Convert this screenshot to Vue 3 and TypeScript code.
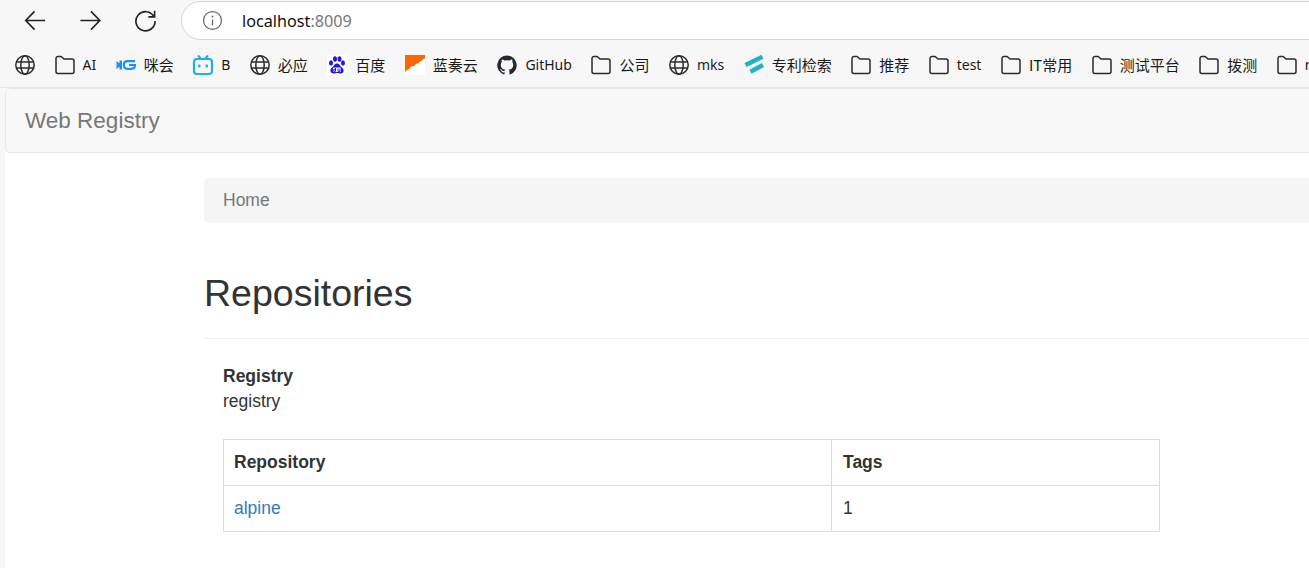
<script setup lang="ts">
type Mark = 'globe' | 'folder' | 'mihui' | 'bili' | 'baidu' | 'lanzou' | 'github' | 'patent'
interface Bookmark { icon: Mark; label?: string; latin?: boolean }
const bookmarks: Bookmark[] = [
  { icon: 'globe' },
  { icon: 'folder', label: 'AI', latin: true },
  { icon: 'mihui', label: '咪会' },
  { icon: 'bili', label: 'B', latin: true },
  { icon: 'globe', label: '必应' },
  { icon: 'baidu', label: '百度' },
  { icon: 'lanzou', label: '蓝奏云' },
  { icon: 'github', label: 'GitHub', latin: true },
  { icon: 'folder', label: '公司' },
  { icon: 'globe', label: 'mks', latin: true },
  { icon: 'patent', label: '专利检索' },
  { icon: 'folder', label: '推荐' },
  { icon: 'folder', label: 'test', latin: true },
  { icon: 'folder', label: 'IT常用' },
  { icon: 'folder', label: '测试平台' },
  { icon: 'folder', label: '拨测' },
  { icon: 'folder', label: 'mks', latin: true },
]
</script>

<template>
  <div class="window">
    <header class="toolbar">
      <svg class="nav-icon" viewBox="0 0 24 24"><path d="M2.5 12H22M11 2.5 1.8 12l9.2 9.5" /></svg>
      <svg class="nav-icon" viewBox="0 0 24 24"><path d="M1.5 12H21.5M12.5 2.5l9.2 9.5-9.2 9.5" /></svg>
      <svg class="nav-icon" viewBox="0 0 24 24"><path d="M20.8 8A10 10 0 1 0 22 12.5M21.5 1.8V8.2H15" /></svg>
      <div class="address">
        <svg class="info" viewBox="0 0 20 20">
          <circle cx="10" cy="10" r="9.4" />
          <path d="M10 9v6" />
          <circle class="dot" cx="10" cy="5.8" r="1" />
        </svg>
        <span class="url">localhost<span class="port">:8009</span></span>
      </div>
    </header>

    <nav class="bookmarks">
      <div v-for="(b, i) in bookmarks" :key="i" class="bookmark">
        <svg class="mark" viewBox="0 0 20 20">
          <g v-if="b.icon === 'globe'" class="line">
            <circle cx="10" cy="10" r="9.2" />
            <ellipse cx="10" cy="10" rx="4.2" ry="9.2" />
            <path d="M1.4 7h17.2M1.4 13h17.2" />
          </g>
          <path v-else-if="b.icon === 'folder'" class="line"
            d="M1 5v11.5A2 2 0 0 0 3 18.5H17A2 2 0 0 0 19 16.5V6A2 2 0 0 0 17 4H9L6.800 2A1.500 1.500 0 0 0 5.800 1.500H3A2 2 0 0 0 1 3.500V5Z" />
          <g v-else-if="b.icon === 'mihui'">
            <path fill="#1890ff" d="M0.500 6 3.500 8.200V5.500H6V14.500H3.500V11.800L0.500 14Z" />
            <path fill="none" stroke="#1890ff" stroke-width="2.200" d="M19 6.200H11.500Q7.800 6.200 7.800 10T11.500 13.800H15.500Q19 13.800 19 10H13" />
          </g>
          <g v-else-if="b.icon === 'bili'">
            <path fill="none" stroke="#20b0e3" stroke-width="2" stroke-linecap="round" d="M5.500 1 8 4M14.500 1 12 4" />
            <rect x="1" y="4" width="18" height="15" rx="3" fill="none" stroke="#20b0e3" stroke-width="2.200" />
            <rect x="5" y="9.500" width="2.500" height="3" rx="1" fill="#20b0e3" />
            <rect x="12.500" y="9.500" width="2.500" height="3" rx="1" fill="#20b0e3" />
          </g>
          <g v-else-if="b.icon === 'baidu'">
            <rect width="20" height="20" fill="#fff" />
            <g fill="#2319dc">
              <ellipse cx="4" cy="8" rx="2" ry="2.700" />
              <ellipse cx="8" cy="4" rx="2" ry="2.800" />
              <ellipse cx="12.500" cy="4" rx="2" ry="2.800" />
              <ellipse cx="16" cy="8" rx="2" ry="2.700" />
              <path d="M10 8.500C7.500 8.500 7 11 5 12.500 2.500 14.500 3 18.500 6.500 18.500 8 18.500 9 18 10 18S12.500 18.500 14 18.500C17 18.500 17.500 14.500 15 12.500 13 11 12.500 8.500 10 8.500Z" />
            </g>
            <rect x="6" y="12.500" width="8" height="4.500" rx="1" fill="#fff" />
            <path fill="none" stroke="#2319dc" stroke-width="1" d="M8.500 12.800v3.500H6.800v-2h1.700M11 13.500v2.800h2v-2.800" />
          </g>
          <g v-else-if="b.icon === 'lanzou'">
            <rect width="20" height="20" fill="#fff" />
            <path fill="#ff6600" d="M0 0H20V3.500C18 3.500 17.500 5 16.500 6 15 6 14 7.500 13 8.500 11 8 10 10 9 11 6.500 10.500 5 12.500 4 14 2.500 14.500 1 15.500 0 17Z" />
          </g>
          <path v-else-if="b.icon === 'github'" fill="#24292f"
            d="M10 .5a9.750 9.750 0 0 0-3.080 19c.49.090.670-.210.670-.470v-1.700c-2.710.590-3.280-1.310-3.280-1.310-.440-1.130-1.080-1.430-1.080-1.430-.880-.600.070-.590.070-.590.980.070 1.490 1 1.490 1 .870 1.490 2.280 1.060 2.840.810.090-.630.340-1.060.620-1.300-2.160-.250-4.440-1.080-4.440-4.810 0-1.060.380-1.930 1-2.610-.100-.250-.430-1.240.100-2.580 0 0 .820-.260 2.680 1a9.300 9.300 0 0 1 4.880 0c1.860-1.260 2.680-1 2.680-1 .530 1.340.200 2.330.100 2.580.620.680 1 1.550 1 2.610 0 3.740-2.280 4.560-4.450 4.800.350.300.660.900.660 1.810v2.680c0 .260.180.570.670.470A9.750 9.750 0 0 0 10 .5Z" />
          <g v-else-if="b.icon === 'patent'" fill="none" stroke="#1fb3c8" stroke-width="4.500">
            <path d="M1.500 10 18.500 1.800" />
            <path d="M6.500 16.800 19 10" />
          </g>
        </svg>
        <span v-if="b.label" class="label" :class="{ latin: b.latin }">{{ b.label }}</span>
      </div>
    </nav>

    <main class="page">
      <div class="navbar"><span class="brand">Web Registry</span></div>
      <div class="container">
        <div class="breadcrumb">Home</div>
        <h1 class="title">Repositories</h1>
        <section class="body">
          <strong class="reg-label">Registry</strong>
          <div class="reg-value">registry</div>
          <table class="repos">
            <colgroup>
              <col class="col-name" />
              <col />
            </colgroup>
            <thead>
              <tr><th>Repository</th><th>Tags</th></tr>
            </thead>
            <tbody>
              <tr><td><a class="repo-link" href="#">alpine</a></td><td>1</td></tr>
            </tbody>
          </table>
        </section>
      </div>
    </main>
  </div>
</template>

<style>
html, body { margin: 0; background: #f7f7f7; overflow: hidden; }
</style>

<style scoped>
.window {
  width: 1309px;
  height: 568px;
  overflow: hidden;
  background: #f7f7f7;
  font-family: "Liberation Sans", Arial, sans-serif;
}
.toolbar {
  height: 45px;
  box-sizing: border-box;
  display: flex;
  align-items: flex-start;
  padding: 1px 0 0 24px;
}
.nav-icon {
  width: 23px;
  height: 23px;
  margin: 8px 32px 0 0;
  flex: none;
  fill: none;
  stroke: #222;
  stroke-width: 1.7;
}
.nav-icon:nth-child(3) { margin-right: 24px; }
.address {
  flex: none;
  width: 1300px;
  height: 39px;
  box-sizing: border-box;
  display: flex;
  align-items: center;
  background: #fff;
  border: 1px solid #d4d4d4;
  border-radius: 20px;
  padding-left: 21px;
}
.info {
  width: 19px;
  height: 19px;
  fill: none;
  stroke: #666;
  stroke-width: 1.300;
  overflow: visible;
}
.info .dot { fill: #666; stroke: none; }
.url {
  margin-left: 20px;
  font: 16.200px "Noto Sans", "Open Sans", sans-serif;
  color: #111;
}
.port { color: #777; }
.bookmarks {
  height: 43px;
  box-sizing: border-box;
  display: flex;
  align-items: center;
  gap: 19.500px;
  padding: 0 0 3px 15px;
  white-space: nowrap;
  border-bottom: 1px solid #e6e6e6;
}
.bookmark {
  flex: none;
  display: flex;
  align-items: center;
  gap: 8px;
}
.mark { width: 20px; height: 20px; flex: none; overflow: visible; }
.line { fill: none; stroke: #2b2b2b; stroke-width: 1.500; }
path.line { fill: none; stroke: #2b2b2b; stroke-width: 1.500; }
.label {
  font: 15px "Noto Sans CJK SC", "Noto Sans", sans-serif;
  line-height: 20px;
  color: #1a1a1a;
}
.label.latin { font: 14px "Noto Sans", "Open Sans", sans-serif; line-height: 20px; }
.page {
  margin-left: 5px;
  height: 480px;
  background: #fff;
  border-top-left-radius: 6px;
  font-size: 17.500px;
  line-height: 25px;
  color: #333;
  overflow: hidden;
}
.navbar {
  height: 65px;
  box-sizing: border-box;
  display: flex;
  align-items: center;
  padding-left: 19px;
  background: #f8f8f8;
  border: 1px solid #e7e7e7;
  border-right: 0;
  border-radius: 5px 0 0 5px;
}
.brand { font-size: 22.500px; color: #777; }
.container { width: 1425px; margin: 25px 0 0 199px; }
.breadcrumb {
  height: 45px;
  box-sizing: border-box;
  display: flex;
  align-items: center;
  padding-left: 19px;
  background: #f5f5f5;
  border-radius: 5px;
  color: #777;
}
.title {
  margin: 49px 0 0;
  padding-bottom: 24px;
  font-size: 37.500px;
  line-height: 42px;
  font-weight: 400;
  border-bottom: 1px solid #eee;
}
.body { width: 937px; padding: 25px 0 0 19px; }
.reg-label { display: block; font-weight: 700; }
.repos {
  width: 937px;
  margin-top: 25px;
  border-collapse: collapse;
  table-layout: fixed;
}
.col-name { width: 608px; }
.repos th, .repos td {
  height: 46px;
  box-sizing: border-box;
  padding: 0 10px;
  text-align: left;
  border: 1px solid #ddd;
}
.repos th:last-child, .repos td:last-child { padding-left: 11px; }
.repo-link { color: #337ab7; text-decoration: none; }
</style>
